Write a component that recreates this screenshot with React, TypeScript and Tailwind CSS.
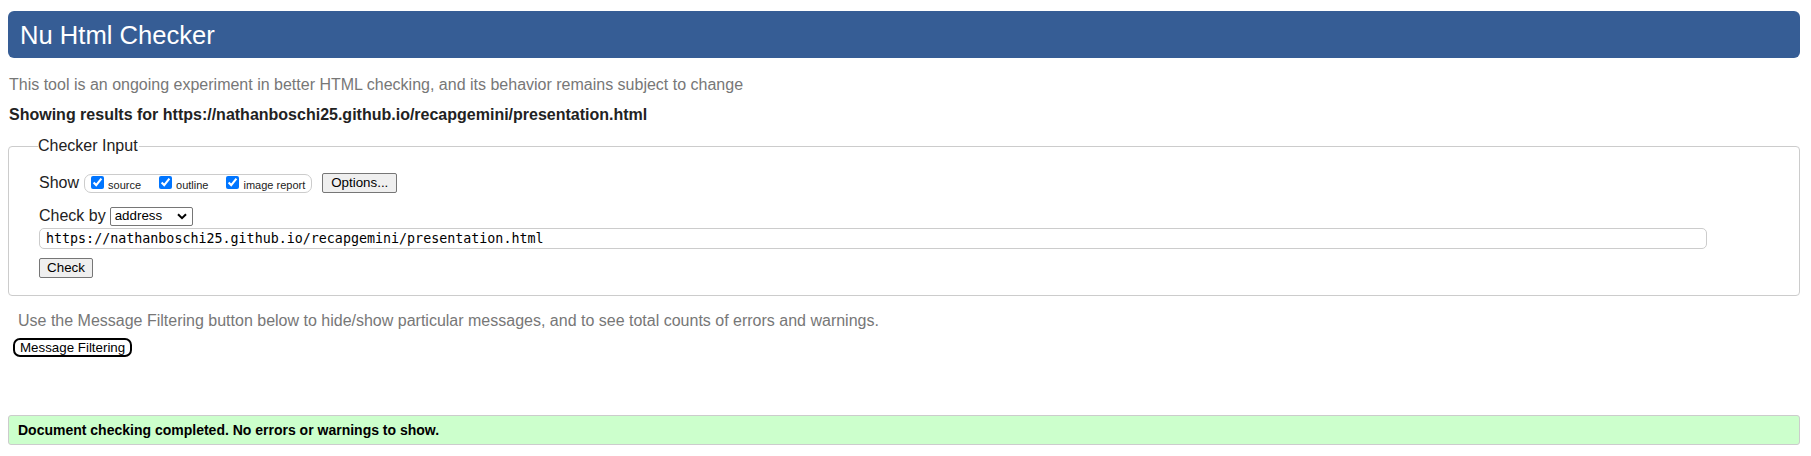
const URL_TO_CHECK = "https://nathanboschi25.github.io/recapgemini/presentation.html";

const showOptions = [
  { label: "source", last: false },
  { label: "outline", last: false },
  { label: "image report", last: true },
];

export default function App() {
  return (
    <div
      className="pl-2 pr-[11px] pt-[11px] bg-white text-[#222] text-[16px] leading-[18px]"
      style={{ fontFamily: '"Liberation Sans", Arial, sans-serif' }}
    >
      {/* Title bar */}
      <h1 className="h-[47px] flex items-center pl-[12px] bg-[#365d95] text-white text-[25.6px] font-normal rounded-[6px]">
        Nu Html Checker
      </h1>

      <p className="mt-[18px] pl-[1px] text-[#777]">
        This tool is an ongoing experiment in better HTML checking, and its behavior remains subject to change
      </p>
      <p className="mt-[12px] pl-[1px] font-bold text-[#222]">
        Showing results for {URL_TO_CHECK}
      </p>

      {/* Checker input */}
      <fieldset className="mt-[13px] border border-[#ccc] rounded-[4px] pl-[30px] pr-[92px] pb-[17px]">
        <legend className="ml-[-1px] pl-0 pr-[1px] text-[#222]">Checker Input</legend>

        <div className="mt-[18px] h-[20px] flex items-center">
          <span>Show</span>
          <span className="ml-[5px] h-[19px] inline-flex items-start border border-[#ccc] rounded-[7px] pl-[6px] pr-[6px] text-[11px] leading-[17px]">
            {showOptions.map((o) => (
              <label key={o.label} className={`inline-flex items-start ${o.last ? "" : "mr-[18px]"}`}>
                <input
                  type="checkbox"
                  defaultChecked
                  className="w-[13px] h-[13px] mt-[1px] mr-[4px] accent-[#0075ff]"
                />
                <span className="mt-[2px]">{o.label}</span>
              </label>
            ))}
          </span>
          <button className="ml-[10px] h-[20px] px-[8px] text-[13.33px] leading-[16px] bg-[#efefef] border border-[#767676] rounded-[2px] text-black">
            Options...
          </button>
        </div>

        <div className="mt-[13px] h-[20px] flex items-center">
          <span>Check by</span>
          <span className="ml-[4px] w-[83px] h-[19px] flex items-center justify-between pl-[4px] pr-[5px] border border-[#767676] rounded-[2px] text-[13.33px] text-black bg-white">
            <span>address</span>
            <svg width="10" height="7" viewBox="0 0 10 7" className="mt-[1px]">
              <path d="M1 1.2 L5 5.2 L9 1.2" fill="none" stroke="#000" strokeWidth="2" />
            </svg>
          </span>
        </div>

        <div
          className="mt-[2px] h-[21px] flex items-center pl-[6px] border border-[#ccc] rounded-[5px] text-[13.33px] text-black"
          style={{ fontFamily: '"DejaVu Sans Mono", monospace' }}
        >
          {URL_TO_CHECK}
        </div>

        <button className="mt-[9px] h-[20px] w-[54px] text-[13.33px] leading-[16px] bg-[#efefef] border border-[#767676] rounded-[2px] text-black">
          Check
        </button>
      </fieldset>

      {/* Filtering */}
      <div className="pl-[5px]">
        <p className="mt-[16px] pl-[5px] text-[#777]">
          Use the Message Filtering button below to hide/show particular messages, and to see total counts of errors and warnings.
        </p>
        <button className="mt-[8px] h-[19px] px-[5px] text-[13.33px] leading-[15px] text-black bg-white border-2 border-black rounded-[7px]">
          Message Filtering
        </button>
      </div>

      {/* Result */}
      <div className="mt-[58px] h-[30px] flex items-center pl-[9px] bg-[#ccffcc] border border-[#ccc] rounded-[3px] text-[14px] font-bold text-black">
        Document checking completed. No errors or warnings to show.
      </div>
    </div>
  );
}
